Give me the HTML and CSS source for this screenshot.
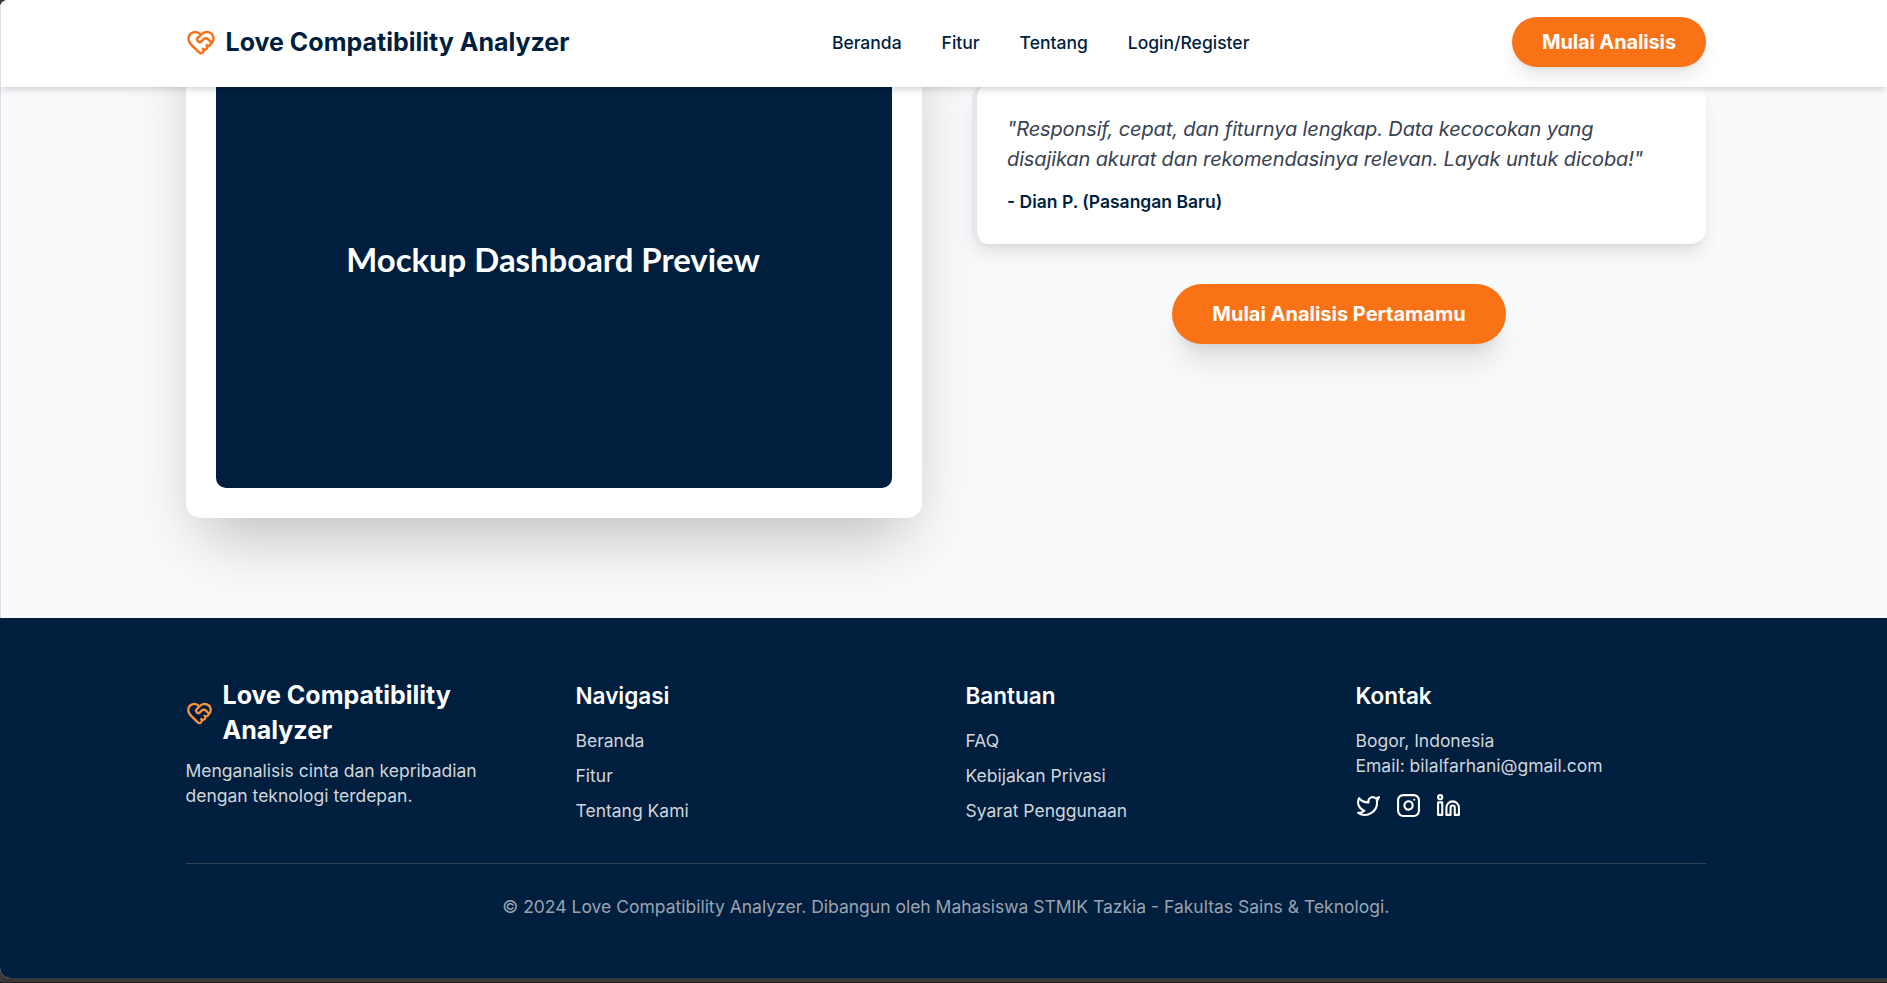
FILE: index.html
```html
<!DOCTYPE html>
<html lang="id">
<head>
<meta charset="utf-8">
<title>Love Compatibility Analyzer</title>
<link rel="stylesheet" href="styles.css">
</head>
<body>
<svg class="defs" width="0" height="0">
  <symbol id="heart" viewBox="0 0 24 24"><path d="M19.414 14.414C21 12.828 22 11.5 22 9.5a5.5 5.5 0 0 0-9.591-3.676.6.6 0 0 1-.818.001A5.5 5.5 0 0 0 2 9.5c0 2.3 1.5 4 3 5.5l5.535 5.362a2 2 0 0 0 2.879.052 2.12 2.12 0 0 0-.004-3 2.124 2.124 0 1 0 3-3 2.124 2.124 0 0 0 3.004 0 2 2 0 0 0 0-2.828l-1.881-1.882a2.41 2.41 0 0 0-3.409 0l-1.71 1.71a2 2 0 0 1-2.828 0 2 2 0 0 1 0-2.828l2.823-2.762"/></symbol>
</svg>
<div class="window">
  <header class="header">
    <div class="container header-row">
      <a class="brand"><svg class="icon brand-icon"><use href="#heart"/></svg><span>Love Compatibility Analyzer</span></a>
      <nav class="nav"><a>Beranda</a><a>Fitur</a><a>Tentang</a><a>Login/Register</a></nav>
      <a class="button button-small">Mulai Analisis</a>
    </div>
  </header>
  <main class="main">
    <div class="container preview">
      <div class="mockup">
        <svg class="mockup-image" viewBox="0 0 676 451"><rect width="676" height="451"/><text x="337" y="235" text-anchor="middle">Mockup Dashboard Preview</text></svg>
      </div>
      <div class="testimonials">
        <blockquote class="quote">
          <p class="quote-text">"Responsif, cepat, dan fiturnya lengkap. Data kecocokan yang disajikan akurat dan rekomendasinya relevan. Layak untuk dicoba!"</p>
          <p class="quote-author">- Dian P. (Pasangan Baru)</p>
        </blockquote>
        <a class="button button-large">Mulai Analisis Pertamamu</a>
      </div>
    </div>
  </main>
  <footer class="footer">
    <div class="container">
      <div class="columns">
        <div>
          <div class="footer-brand"><svg class="icon footer-icon"><use href="#heart"/></svg><span>Love Compatibility Analyzer</span></div>
          <p class="tagline">Menganalisis cinta dan kepribadian dengan teknologi terdepan.</p>
        </div>
        <div><h4>Navigasi</h4><ul class="links"><li>Beranda</li><li>Fitur</li><li>Tentang Kami</li></ul></div>
        <div><h4>Bantuan</h4><ul class="links"><li>FAQ</li><li>Kebijakan Privasi</li><li>Syarat Penggunaan</li></ul></div>
        <div>
          <h4>Kontak</h4>
          <p>Bogor, Indonesia</p>
          <p>Email: bilalfarhani@gmail.com</p>
          <div class="social">
            <svg class="icon" viewBox="0 0 24 24"><path d="M22 4s-.7 2.1-2 3.4c1.6 10-9.4 17.3-18 11.6 2.2.1 4.4-.6 6-2C3 15.5.5 9.6 3 5c2.2 2.6 5.6 4.1 9 4-.9-4.2 4-6.6 7-3.8 1.1 0 3-1.2 3-1.2z"/></svg>
            <svg class="icon" viewBox="0 0 24 24"><rect x="2" y="2" width="20" height="20" rx="5"/><path d="M16 11.37A4 4 0 1 1 12.63 8 4 4 0 0 1 16 11.37z"/><path d="M17.5 6.5h.01"/></svg>
            <svg class="icon" viewBox="0 0 24 24"><path d="M16 8a6 6 0 0 1 6 6v7h-4v-7a2 2 0 0 0-4 0v7h-4v-7a6 6 0 0 1 6-6z"/><rect x="2" y="9" width="4" height="12"/><circle cx="4" cy="4" r="2"/></svg>
          </div>
        </div>
      </div>
      <p class="copyright">© 2024 Love Compatibility Analyzer. Dibangun oleh Mahasiswa STMIK Tazkia - Fakultas Sains &amp; Teknologi.</p>
    </div>
  </footer>
</div>
</body>
</html>
```
FILE: styles.css
```css
* { box-sizing: border-box; margin: 0; padding: 0; }
body {
  height: 983px;
  overflow: hidden;
  background: #3a3838;
  border-bottom: 1px solid #201d22;
  font-family: Inter, "Liberation Sans", sans-serif;
  font-size: 17.5px;
  line-height: 25px;
  color: #001f3f;
}
.defs { display: block; height: 0; }
.window {
  height: 978px;
  overflow: hidden;
  border-radius: 8px 0 0 10px;
  background: #f9fafc;
}
.container { width: 1520.5px; margin-left: 185.5px; }
.icon {
  width: 25px;
  height: 25px;
  fill: none;
  stroke: currentColor;
  stroke-width: 2;
  stroke-linecap: round;
  stroke-linejoin: round;
}

.header {
  position: relative;
  z-index: 2;
  height: 87px;
  padding: 17px 0 20px;
  background: #fff;
  border-left: 1px solid #dcdde0;
  box-shadow: 0 5px 7.5px -1.25px rgba(0,0,0,.1), 0 2.5px 5px -2.5px rgba(0,0,0,.1);
}
.header .container { margin-left: 184.5px; }
.header-row { display: flex; align-items: center; justify-content: space-between; }
.brand { display: flex; align-items: center; gap: 10px; font-size: 25px; line-height: 35px; font-weight: 700; }
.brand-icon { width: 30px; height: 30px; color: #f97316; }
.nav { display: flex; gap: 40px; font-weight: 500; }
.button {
  border-radius: 40px;
  background: #f97316;
  color: #fff;
  font-size: 20px;
  line-height: 30px;
  font-weight: 700;
}
.button-small {
  padding: 10px 30px;
  letter-spacing: -0.13px;
  box-shadow: 0 12.5px 18.75px -3.75px rgba(0,0,0,.1), 0 5px 7.5px -5px rgba(0,0,0,.1);
}
.button-large {
  padding: 15px 40px;
  letter-spacing: -0.01px;
  box-shadow: 0 25px 31px -6px rgba(0,0,0,.1), 0 10px 12.5px -7.5px rgba(0,0,0,.1);
}

.main { height: 611px; margin-top: -80px; border-left: 1px solid #dcdde0; }
.preview { display: grid; grid-template-columns: 736px 734px; gap: 50px; margin-left: 185px; }
.mockup {
  padding: 30px;
  height: 511px;
  background: #fff;
  border-radius: 15px;
  box-shadow: 0 31.25px 62.5px -15px rgba(0,0,0,.25);
}
.mockup-image { display: block; width: 676px; height: 451px; border-radius: 10px; }
.mockup-image rect { fill: #001f3f; }
.mockup-image text { fill: #fff; font: 700 32.9px Lato, sans-serif; }
.testimonials { display: flex; flex-direction: column; align-items: center; gap: 40px; padding-top: 77px; }
.quote {
  width: 100%;
  padding: 30px;
  background: #fff;
  border-left: 5px solid #e5e7eb;
  border-radius: 15px;
  box-shadow: 0 12.5px 18.75px -3.75px rgba(0,0,0,.1), 0 5px 7.5px -5px rgba(0,0,0,.1);
}
.quote-text { margin-bottom: 15px; font-size: 20px; line-height: 30px; font-style: italic; letter-spacing: -0.12px; color: #374151; }
.quote-author { font-weight: 600; }

.footer { height: 360px; padding-top: 60px; background: #001f3f; color: #d1d5db; }
.columns { display: grid; grid-template-columns: repeat(4, 350px); gap: 40px; padding-bottom: 40px; }
.footer-brand { display: flex; align-items: center; gap: 10px; margin-bottom: 10px; font-size: 25px; line-height: 35px; font-weight: 700; color: #fff; }
.footer-icon { flex: none; width: 27px; height: 30px; color: #fb923c; }
.tagline { width: 310px; }
h4 { margin-bottom: 15px; font-size: 22.5px; line-height: 35px; font-weight: 600; color: #fff; }
.links { display: grid; gap: 10px; list-style: none; }
.social { display: flex; gap: 15px; margin-top: 15px; color: #fff; }
.copyright { padding-top: 30px; border-top: 1px solid #33435a; text-align: center; color: #9ca3af; }
```
